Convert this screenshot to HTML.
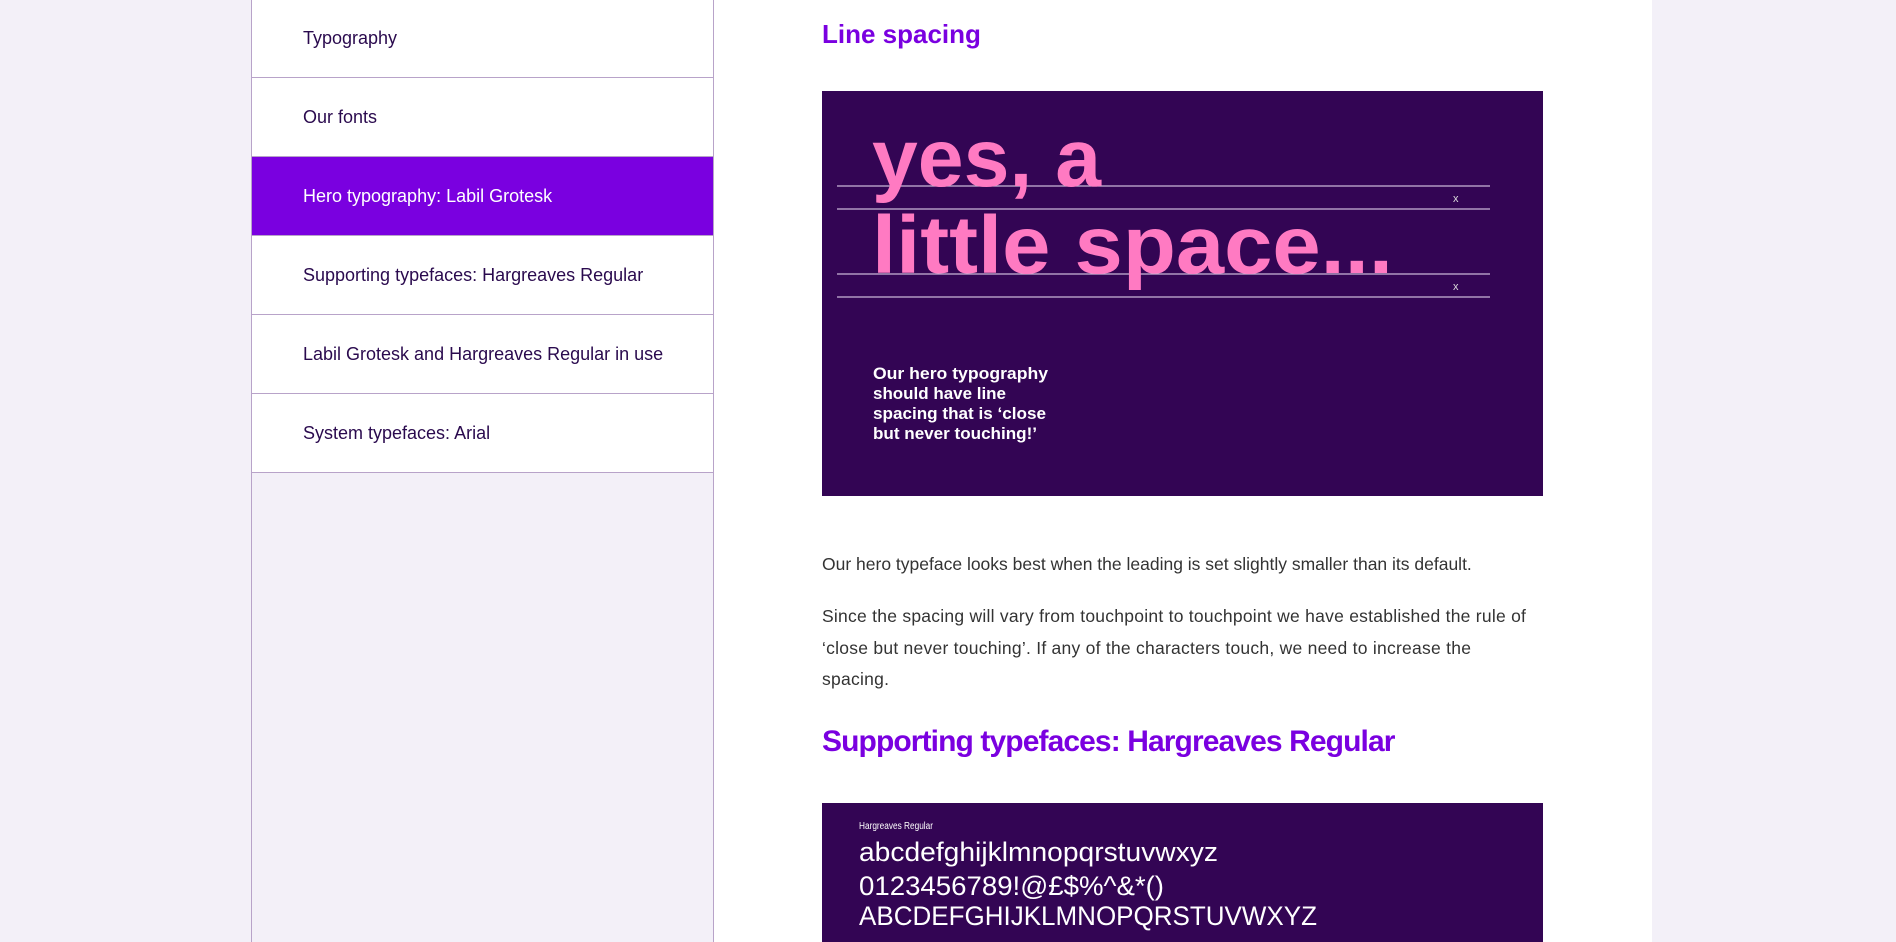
<!DOCTYPE html>
<html><head><meta charset="utf-8"><style>
*{margin:0;padding:0;box-sizing:border-box}
body{width:1896px;height:942px;overflow:hidden;background:#f3f0f8;font-family:"Liberation Sans",sans-serif;position:relative}
.side{position:absolute;left:251px;top:0;width:463px;height:942px;background:#f3f0f8;border-left:1px solid #b8a3c9;border-right:1px solid #b8a3c9}
.nav div{height:79px;border-bottom:1px solid #b8a3c9;background:#fff;color:#2a0a4e;font-size:18px;padding-left:51px;display:flex;align-items:center}
.nav div.act{background:#7a00e0;color:#fff}
.main{position:absolute;left:714px;top:0;width:938px;height:942px;background:#fff}
h1{position:absolute;left:108px;top:19px;font-size:26px;color:#7a00e0;font-weight:bold}
h2{position:absolute;left:108px;top:725px;font-size:30px;color:#7a00e0;font-weight:bold;letter-spacing:-0.9px}
p{position:absolute;left:108px;width:760px;font-size:17.5px;color:#333;line-height:31.5px}
svg{position:absolute;display:block}
</style></head><body>
<div class="side"><div class="nav">
<div style="height:78px">Typography</div>
<div>Our fonts</div>
<div class="act">Hero typography: Labil Grotesk</div>
<div>Supporting typefaces: Hargreaves Regular</div>
<div>Labil Grotesk and Hargreaves Regular in use</div>
<div>System typefaces: Arial</div>
</div></div>
<div class="main">
<h1>Line spacing</h1>
<svg style="left:108px;top:91px" width="721" height="405">
<rect width="721" height="405" fill="#330554"/>
<g stroke="#c9b8d8" stroke-width="1.2">
<line x1="15" y1="95" x2="668" y2="95"/><line x1="15" y1="118" x2="668" y2="118"/>
<line x1="15" y1="183" x2="668" y2="183"/><line x1="15" y1="206" x2="668" y2="206"/></g>
<text x="631" y="111" fill="#ddd" font-size="11" font-family="Liberation Sans">x</text>
<text x="631" y="199" fill="#ddd" font-size="11" font-family="Liberation Sans">x</text>
<g fill="#ff7ac2" font-family="Liberation Sans" font-weight="bold" font-size="82">
<text x="50" y="95" textLength="229" lengthAdjust="spacingAndGlyphs">yes, a</text>
<text x="50" y="182" textLength="521" lengthAdjust="spacingAndGlyphs">little space...</text></g>
<g fill="#fff" font-family="Liberation Sans" font-weight="bold" font-size="17">
<text x="51" y="288" textLength="175" lengthAdjust="spacingAndGlyphs">Our hero typography</text>
<text x="51" y="308" textLength="133" lengthAdjust="spacingAndGlyphs">should have line</text>
<text x="51" y="328" textLength="173" lengthAdjust="spacingAndGlyphs">spacing that is ‘close</text>
<text x="51" y="348" textLength="164" lengthAdjust="spacingAndGlyphs">but never touching!’</text></g>
</svg>
<p style="top:549px">Our hero typeface looks best when the leading is set slightly smaller than its default.</p>
<p style="top:601px;letter-spacing:0.25px">Since the spacing will vary from touchpoint to touchpoint we have established the rule of<br>‘close but never touching’. If any of the characters touch, we need to increase the<br>spacing.</p>
<h2>Supporting typefaces: Hargreaves Regular</h2>
<svg style="left:108px;top:803px" width="721" height="139">
<rect width="721" height="139" fill="#330554"/>
<g fill="#fff" font-family="Liberation Sans">
<text x="37" y="26" font-size="10" textLength="74" lengthAdjust="spacingAndGlyphs">Hargreaves Regular</text>
<text x="37" y="58" font-size="27" textLength="359" lengthAdjust="spacingAndGlyphs">abcdefghijklmnopqrstuvwxyz</text>
<text x="37" y="92" font-size="27" textLength="305" lengthAdjust="spacingAndGlyphs">0123456789!@£$%^&amp;*()</text>
<text x="37" y="122" font-size="27" textLength="458" lengthAdjust="spacingAndGlyphs">ABCDEFGHIJKLMNOPQRSTUVWXYZ</text></g>
</svg>
</div>
</body></html>
